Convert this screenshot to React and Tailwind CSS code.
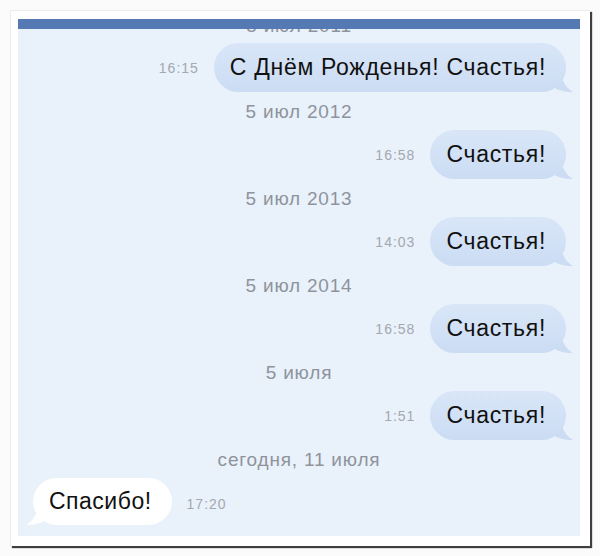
import React from "react";

const font = { fontFamily: '"Liberation Sans", Arial, sans-serif' };

function OutBubble({ time, text }) {
  return (
    <div className="flex items-center justify-end pr-[14px]">
      <span className="mr-[15px] mt-[2px] text-[14px] tracking-[1px] text-[#a3a8ae]">{time}</span>
      <div className="relative">
        <div className="relative z-10 flex h-[49px] items-center rounded-[25px] bg-gradient-to-b from-[#d9e6f8] to-[#cbdcf3] pl-[16px] pr-[20px] text-[23px] tracking-[0.7px] text-[#111]">
          {text}
        </div>
        <svg className="absolute bottom-[-1px] right-[-8px] z-0" width="24" height="22" viewBox="0 0 24 22">
          <path d="M0 0 L10 0 C12 10 16 17 23 21 C14 21 7 19 2 15 Z" fill="#cbdcf3" />
        </svg>
      </div>
    </div>
  );
}

function DateLabel({ children, className = "" }) {
  return (
    <div className={"flex h-[20px] items-center justify-center text-[19px] tracking-[0.8px] text-[#8e949b] " + className}>
      {children}
    </div>
  );
}

export default function App() {
  return (
    <div className="h-[556px] w-[600px] bg-[#fbfbfb] pl-[10px] pt-[10px]" style={font}>
      <div className="h-[536px] w-[580px] border-l border-t border-[#ececec] bg-white pb-[10px] pl-[7px] pr-[10px] pt-[8px] shadow-[2px_2px_1px_rgba(0,0,0,0.75)]">
        <div className="relative h-[517px] w-[562px] overflow-hidden bg-[#e9f1fb]">
          <div className="absolute left-0 right-0 top-0 z-20 h-[10px] bg-[#5579b3]" />
          <div className="flex flex-col">
            <DateLabel className="mt-[-3px]">5 июл 2011</DateLabel>
            <div className="mt-[7px]">
              <OutBubble time="16:15" text="С Днём Рожденья! Счастья!" />
            </div>
            <DateLabel className="mt-[10px]">5 июл 2012</DateLabel>
            <div className="mt-[8px]">
              <OutBubble time="16:58" text="Счастья!" />
            </div>
            <DateLabel className="mt-[10px]">5 июл 2013</DateLabel>
            <div className="mt-[8px]">
              <OutBubble time="14:03" text="Счастья!" />
            </div>
            <DateLabel className="mt-[10px]">5 июл 2014</DateLabel>
            <div className="mt-[8px]">
              <OutBubble time="16:58" text="Счастья!" />
            </div>
            <DateLabel className="mt-[10px]">5 июля</DateLabel>
            <div className="mt-[8px]">
              <OutBubble time="1:51" text="Счастья!" />
            </div>
            <DateLabel className="mt-[10px]">сегодня, 11 июля</DateLabel>
            <div className="mt-[8px] flex items-center pl-[15px]">
              <div className="relative">
                <div className="relative z-10 flex h-[47px] items-center rounded-[24px] bg-white pl-[16px] pr-[20px] text-[23px] tracking-[0.5px] text-[#111]">
                  Спасибо!
                </div>
                <svg className="absolute bottom-[-1px] left-[-8px] z-0" width="24" height="22" viewBox="0 0 24 22">
                  <path d="M24 0 L14 0 C12 10 8 17 1 21 C10 21 17 19 22 15 Z" fill="#ffffff" />
                </svg>
              </div>
              <span className="ml-[15px] mt-[6px] text-[14px] tracking-[1px] text-[#a3a8ae]">17:20</span>
            </div>
          </div>
        </div>
      </div>
    </div>
  );
}
